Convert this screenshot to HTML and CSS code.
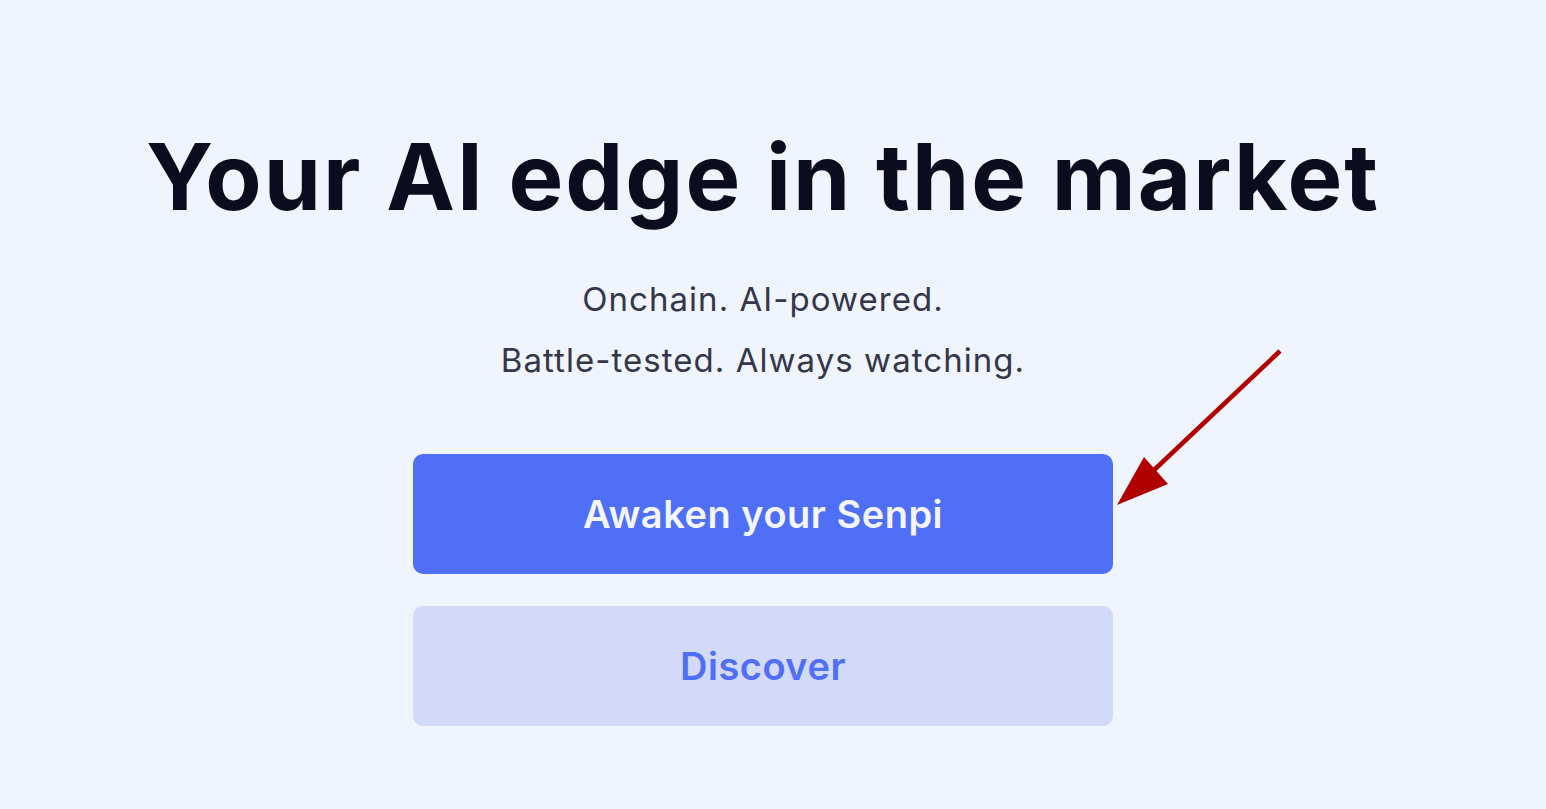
FILE: index.html
```html
<!DOCTYPE html>
<html lang="en">
<head>
<meta charset="utf-8">
<title>Senpi</title>
<link rel="stylesheet" href="styles.css">
</head>
<body>
<main class="hero">
  <h1 class="title">Your AI edge in the market</h1>
  <div class="subtitle">
    <p>Onchain. AI-powered.</p>
    <p>Battle-tested. Always watching.</p>
  </div>
  <div class="actions">
    <button class="btn btn-primary">Awaken your Senpi</button>
    <button class="btn btn-secondary">Discover</button>
    <svg class="arrow" width="180" height="170" viewBox="0 0 180 170" aria-hidden="true">
      <line x1="167" y1="5" x2="40" y2="125" stroke="#b00000" stroke-width="4.5"/>
      <polygon points="4,159 31,111 55,138" fill="#b00000"/>
    </svg>
  </div>
</main>
</body>
</html>
```
FILE: styles.css
```css
html, body {
  margin: 0;
  padding: 0;
  background: #f0f4fc;
}
body {
  font-family: Inter, "Noto Sans", sans-serif;
  width: 1546px;
  height: 809px;
  overflow: hidden;
}
.hero {
  width: 1526px;
  display: flex;
  flex-direction: column;
  align-items: center;
  padding-top: 122px;
}
.title {
  margin: 0;
  font-size: 92px;
  font-weight: 700;
  line-height: 110px;
  color: #0b0d1f;
  letter-spacing: 2px;
  white-space: nowrap;
}
.subtitle {
  margin-top: 49px;
  display: flex;
  flex-direction: column;
  gap: 25px;
  text-align: center;
  color: #34364a;
  font-size: 33px;
  line-height: 36px;
  letter-spacing: 1.05px;
}
.subtitle p {
  margin: 0;
}
.actions {
  position: relative;
  margin-top: 76px;
  display: flex;
  flex-direction: column;
  gap: 32px;
}
.btn {
  width: 700px;
  height: 120px;
  border: none;
  border-radius: 10px;
  font-family: Inter, "Noto Sans", sans-serif;
  font-size: 38px;
  font-weight: 600;
  letter-spacing: 0.5px;
}
.btn-primary {
  background: #4f6ff6;
  color: #f4f6ff;
}
.btn-secondary {
  background: #d3d9f8;
  color: #4f6ff6;
}
.arrow {
  position: absolute;
  left: 700px;
  top: -108px;
}
```
